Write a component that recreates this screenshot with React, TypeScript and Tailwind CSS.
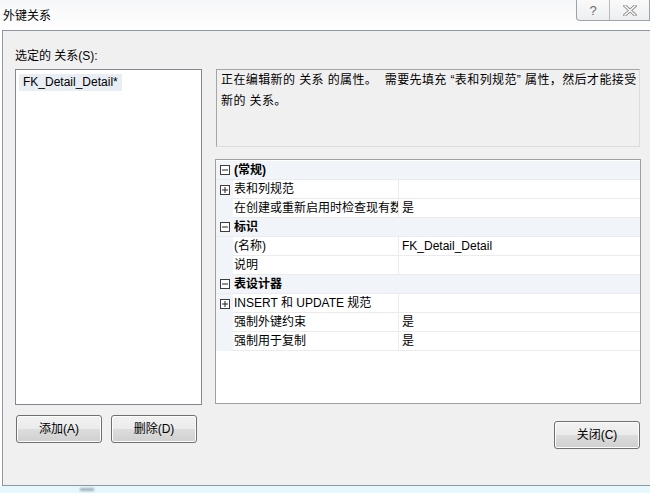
const font = "font-['Liberation_Sans','Noto_Sans_CJK_SC',sans-serif]";

type Row =
  | { kind: "cat"; label: string }
  | { kind: "prop"; label: string; value?: string; expand?: boolean };

const rows: Row[] = [
  { kind: "cat", label: "(常规)" },
  { kind: "prop", label: "表和列规范", expand: true },
  { kind: "prop", label: "在创建或重新启用时检查现有数据", value: "是" },
  { kind: "cat", label: "标识" },
  { kind: "prop", label: "(名称)", value: "FK_Detail_Detail" },
  { kind: "prop", label: "说明" },
  { kind: "cat", label: "表设计器" },
  { kind: "prop", label: "INSERT 和 UPDATE 规范", expand: true },
  { kind: "prop", label: "强制外键约束", value: "是" },
  { kind: "prop", label: "强制用于复制", value: "是" },
];

function Box({ plus }: { plus?: boolean }) {
  return (
    <svg width="10" height="10" viewBox="0 0 10 10" className="block">
      <rect x="0.5" y="0.5" width="9" height="9" fill="white" stroke="#3c3c3c" />
      <line x1="2" y1="5" x2="8" y2="5" stroke="#222" />
      {plus && <line x1="5" y1="2" x2="5" y2="8" stroke="#222" />}
    </svg>
  );
}

function WinButton({ label, className }: { label: string; className?: string }) {
  return (
    <div
      className={`h-[28px] w-[86px] rounded-[3px] border border-[#707070] bg-[linear-gradient(#f2f2f2_0%,#ebebeb_50%,#dddddd_51%,#cfcfcf_100%)] shadow-[inset_0_0_0_1px_#fcfcfc] flex items-center justify-center text-[12px] text-black ${className ?? ""}`}
    >
      {label}
    </div>
  );
}

export default function App() {
  return (
    <div className={`relative w-[650px] h-[493px] overflow-hidden bg-[#e6f8fc] ${font}`}>
      {/* window */}
      <div className="h-[486px] flex flex-col bg-[linear-gradient(#f6f7f8,#ffffff_30px)] pl-[2px]">
        <div className="h-[30px] relative shrink-0">
          <div className="absolute left-[1px] top-[7px] text-[12px] text-black">外键关系</div>
          {/* caption buttons */}
          <div className="absolute right-0 top-0 h-[21px] w-[74px] flex border border-t-0 border-[#9ba3ab] rounded-bl-[4px] bg-[linear-gradient(#fafafa,#eceef0)]">
            <div className="w-[33px] flex items-center justify-center border-r border-[#b6bcc2] text-[13px] text-[#6e6e6e] leading-none">
              ?
            </div>
            <div className="flex-1 flex items-center justify-center">
              <svg width="14" height="11" viewBox="0 0 14 11">
                <path d="M2 1 L12 10 M12 1 L2 10" stroke="#8a8a8a" strokeWidth="3.2" strokeLinecap="square" />
                <path d="M2 1 L12 10 M12 1 L2 10" stroke="#ffffff" strokeWidth="1.4" strokeLinecap="square" />
              </svg>
            </div>
          </div>
        </div>

        {/* client area */}
        <div className="flex-1 border border-r-0 border-[#8e98a3] bg-[#f0f0f0] pl-[12px] pt-[17px] text-[12px] text-black">
          <div className="leading-[16px]">选定的 关系(S):</div>

          <div className="mt-[5px] flex">
            {/* list */}
            <div className="w-[187px] h-[336px] border border-[#828790] bg-white p-[3px] shrink-0">
              <div className="inline-block bg-[#e8eef4] px-[4px] leading-[17px]">FK_Detail_Detail*</div>
            </div>

            <div className="ml-[13px] w-[426px] flex flex-col">
              {/* description */}
              <div className="ml-[1px] w-[424px] h-[78px] border border-[#a5a5a5] border-b-[#dcdcdc] border-r-[#dcdcdc] bg-[#f0f0f0] px-[4px] pt-[0px] leading-[21px] tracking-[0.4px] whitespace-nowrap overflow-hidden">
                正在编辑新的 关系 的属性。&nbsp; 需要先填充 “表和列规范” 属性，然后才能接受
                <br />
                新的 关系。
              </div>

              {/* property grid */}
              <div className="mt-[12px] h-[245px] border border-[#a0a0a0] bg-white overflow-hidden">
                <div className="pt-[1px]">
                  {rows.map((r, i) =>
                    r.kind === "cat" ? (
                      <div key={i} className="h-[19px] flex items-center bg-[#f1f4f9] border-b border-[#e9edf3]">
                        <div className="w-[17px] flex justify-center">
                          <Box />
                        </div>
                        <div className="pl-[1px] font-bold">{r.label}</div>
                      </div>
                    ) : (
                      <div key={i} className="h-[19px] flex items-stretch">
                        <div className="w-[17px] bg-[#f1f4f9] flex items-center justify-center">
                          {r.expand && <Box plus />}
                        </div>
                        <div className="w-[166px] pl-[1px] flex items-center border-b border-r border-[#ebebeb] whitespace-nowrap overflow-hidden">
                          {r.label}
                        </div>
                        <div className="flex-1 pl-[3px] flex items-center border-b border-[#ebebeb]">
                          {r.value}
                        </div>
                      </div>
                    )
                  )}
                </div>
              </div>
            </div>
          </div>

          {/* buttons */}
          <div className="mt-[10px] flex items-start">
            <WinButton label="添加(A)" className="ml-[1px]" />
            <WinButton label="删除(D)" className="ml-[9px]" />
            <WinButton label="关闭(C)" className="ml-[357px] mt-[6px]" />
          </div>
        </div>
      </div>
      <div className="absolute left-[80px] top-[488px] h-[3px] w-[14px] bg-[#6f7f8f] opacity-60 blur-[1px]" />
    </div>
  );
}
